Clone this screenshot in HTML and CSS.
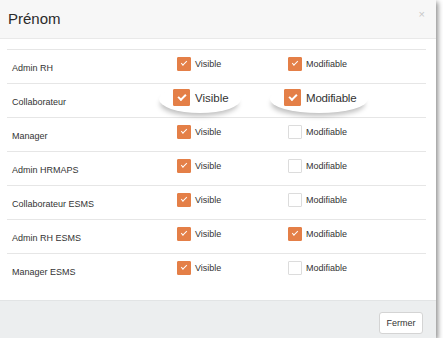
FILE: index.html
```html
<!DOCTYPE html>
<html lang="fr">
<head>
    <meta charset="UTF-8">
    <title>Prénom</title>
    <link rel="stylesheet" href="styles.css">
</head>
<body>
    <div class="modal">
        <div class="modal-header">
            <h4 class="modal-title">Prénom</h4>
            <span class="close">&times;</span>
        </div>
        <div class="modal-body">
            <table class="rights">
                <tr>
                    <td class="role">Admin RH</td>
                    <td class="opt col-visible"><label class="check"><span class="box on"></span>Visible</label></td>
                    <td class="opt"><label class="check"><span class="box on"></span>Modifiable</label></td>
                </tr>
                <tr>
                    <td class="role">Collaborateur</td>
                    <td class="opt col-visible"><label class="check zoomed zoom-left"><span class="box on"></span>Visible</label></td>
                    <td class="opt"><label class="check zoomed zoom-right"><span class="box on"></span>Modifiable</label></td>
                </tr>
                <tr>
                    <td class="role">Manager</td>
                    <td class="opt col-visible"><label class="check"><span class="box on"></span>Visible</label></td>
                    <td class="opt"><label class="check"><span class="box"></span>Modifiable</label></td>
                </tr>
                <tr>
                    <td class="role">Admin HRMAPS</td>
                    <td class="opt col-visible"><label class="check"><span class="box on"></span>Visible</label></td>
                    <td class="opt"><label class="check"><span class="box"></span>Modifiable</label></td>
                </tr>
                <tr>
                    <td class="role">Collaborateur ESMS</td>
                    <td class="opt col-visible"><label class="check"><span class="box on"></span>Visible</label></td>
                    <td class="opt"><label class="check"><span class="box"></span>Modifiable</label></td>
                </tr>
                <tr>
                    <td class="role">Admin RH ESMS</td>
                    <td class="opt col-visible"><label class="check"><span class="box on"></span>Visible</label></td>
                    <td class="opt"><label class="check"><span class="box on"></span>Modifiable</label></td>
                </tr>
                <tr>
                    <td class="role">Manager ESMS</td>
                    <td class="opt col-visible"><label class="check"><span class="box on"></span>Visible</label></td>
                    <td class="opt"><label class="check"><span class="box"></span>Modifiable</label></td>
                </tr>
            </table>
        </div>
        <div class="modal-footer">
            <button class="btn">Fermer</button>
        </div>
    </div>
</body>
</html>
```

FILE: styles.css
```css
body {
    margin: 0;
    background-color: #fff;
    font-family: "Liberation Sans", Arial, sans-serif;
    color: #333;
}

/* Modal box */
.modal {
    width: 436px;
    height: 338px;
    display: flex;
    flex-direction: column;
    background-color: #fff;
    box-shadow: 2px 2px 5px rgba(0, 0, 0, 0.45);
}

.modal-header {
    flex-shrink: 0;
    height: 39px;
    box-sizing: border-box;
    display: flex;
    align-items: center;
    justify-content: space-between;
    padding: 0 11px 0 8px;
    background-color: #f7f7f7;
    border-bottom: 1px solid #e9e9e9;
}

.modal-title {
    margin: 0 0 2px 0;
    font-size: 15px;
    font-weight: normal;
    color: #2a2a2a;
}

.close {
    font-size: 11px;
    color: #c8c8c8;
    margin-top: -11px;
}

.modal-body {
    flex: 1;
    padding: 10px 10px 0 7px;
}

/* Rights table */
.rights {
    width: 100%;
    border-collapse: collapse;
    font-size: 9px;
}

.rights td {
    height: 34px;
    padding: 0;
    border-top: 1px solid #e6e6e6;
    vertical-align: middle;
    box-sizing: border-box;
}

.rights .role {
    width: 170px;
    padding: 3px 0 0 5px;
}

.rights .opt {
    padding-bottom: 3px;
}

.rights .col-visible {
    width: 111px;
}

.check {
    display: inline-flex;
    align-items: center;
    gap: 4px;
}

.box {
    width: 12px;
    height: 12px;
    border: 1px solid #dcdcdc;
    border-radius: 1px;
    background-color: #fff;
    position: relative;
}

.box.on {
    background-color: #e47f47;
    border-color: #e47f47;
}

.box.on::after {
    content: "";
    position: absolute;
    left: 3px;
    top: 3px;
    width: 5px;
    height: 2px;
    border-left: 1.5px solid #fff;
    border-bottom: 1.5px solid #fff;
    transform: rotate(-45deg);
}

/* Magnified callout on the Collaborateur row */
.check.zoomed {
    font-size: 11.5px;
    gap: 5px;
    padding: 4px 12px 7px 14px;
    border-radius: 50%;
    background-color: #fff;
    box-shadow: -1px 5px 5px -2px rgba(0, 0, 0, 0.25);
}

.zoom-left {
    margin-left: -18px;
}

.zoom-right {
    margin-left: -18px;
    letter-spacing: -0.2px;
}

.check.zoomed .box {
    width: 15px;
    height: 15px;
}

.check.zoomed .box.on::after {
    left: 4px;
    top: 4px;
    width: 6px;
    height: 3px;
    border-width: 2px;
}

.modal-footer {
    flex-shrink: 0;
    height: 38px;
    display: flex;
    justify-content: flex-end;
    align-items: flex-start;
    padding: 11px 13px 0 0;
    box-sizing: border-box;
    background-color: #eceeef;
    border-top: 1px solid #e2e4e5;
}

.btn {
    width: 44px;
    height: 22px;
    padding: 0;
    font-family: inherit;
    font-size: 9px;
    color: #333;
    background-color: #fff;
    border: 1px solid #d4d4d4;
    border-radius: 3px;
}
```
